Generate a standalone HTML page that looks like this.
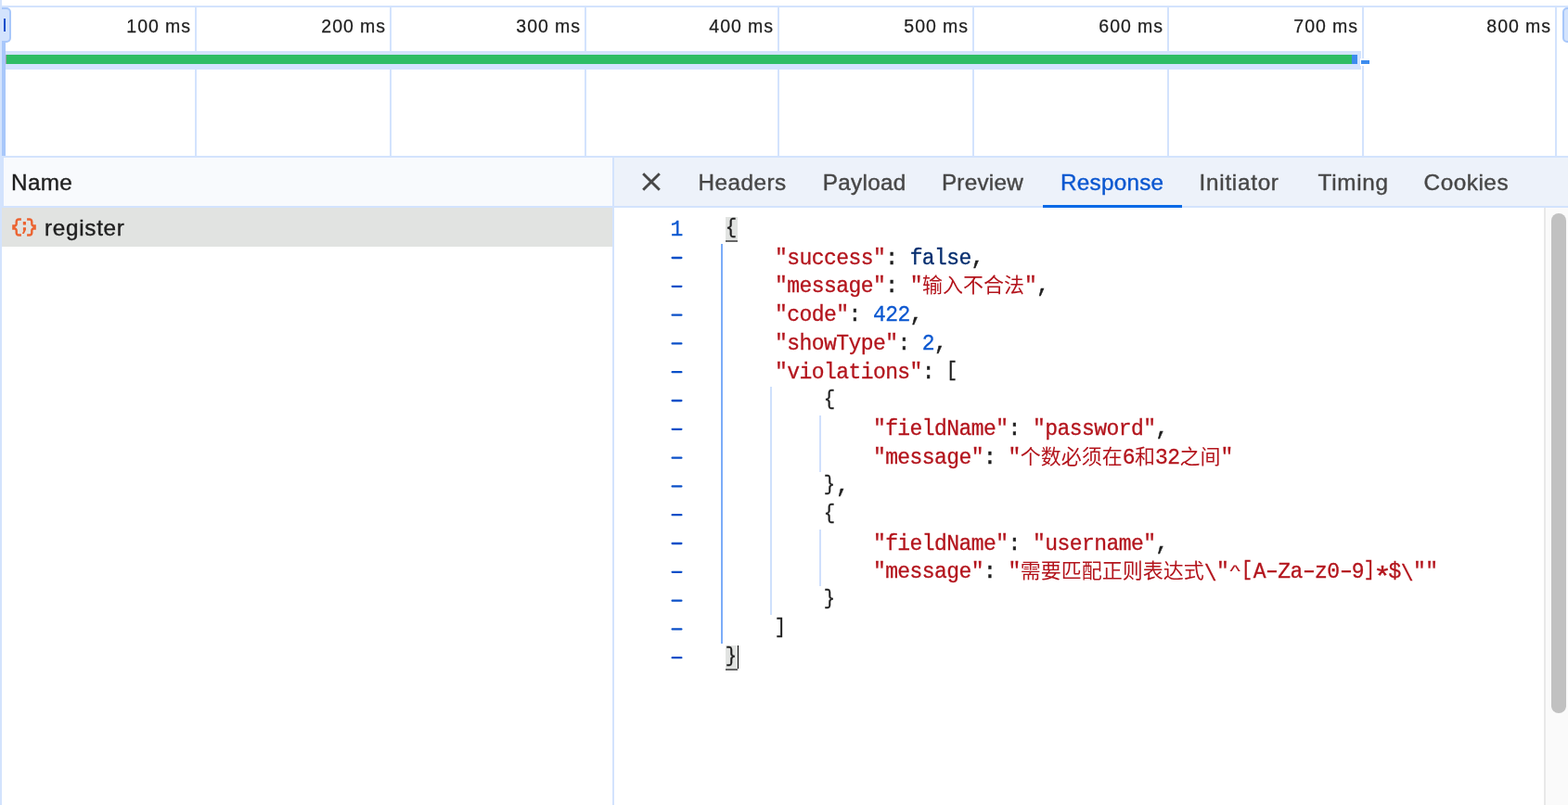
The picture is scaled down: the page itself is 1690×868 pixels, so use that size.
<!DOCTYPE html><html lang="en"><head><meta charset="utf-8"><title>DevTools - Network</title><style>
*{box-sizing:border-box;margin:0;padding:0}
html,body{width:1690px;height:868px;overflow:hidden;background:#fff}
#root{position:absolute;left:0;top:0;width:1690px;height:868px;overflow:hidden;will-change:transform}
body{position:relative;font-family:"Liberation Sans",sans-serif;color:#1f1f1f}
.a{position:absolute}
.d{position:absolute;background:#d3e3fd}
.lbl{position:absolute;top:13.1px;height:30px;line-height:30px;font-size:19.5px;letter-spacing:.95px;color:#1f1f1f;text-align:right;white-space:nowrap;-webkit-text-stroke:.25px currentColor}
.ui{position:absolute;white-space:nowrap;font-size:24.3px;line-height:30px;height:30px;-webkit-text-stroke:.4px currentColor}
.tab{color:#474747;top:181.5px}
.tab.sel{color:#0b57d0}
.ln{position:absolute;left:782.0px;height:30.8px;line-height:30.8px;white-space:pre;font-family:"Liberation Mono",monospace;font-size:23.0px;letter-spacing:-0.5622px;color:#1f1f1f;-webkit-text-stroke:.3px currentColor}
.ln{-webkit-text-stroke:.55px currentColor}
.k{color:#b3141c;-webkit-text-stroke:.3px currentColor}
.n{color:#0b57d0;-webkit-text-stroke:.3px currentColor}
.b{color:#062e6f;-webkit-text-stroke:.3px currentColor}
.dash{position:absolute;left:723.5px;width:12px;height:2.3px;border-radius:1.1px;background:#0a4fc8}
.g{position:absolute;width:2px;background:#cfe0fc}
.cj{display:inline-block;width:22.0px;letter-spacing:0;vertical-align:baseline;text-align:center;font-family:"Liberation Mono","Noto Sans CJK SC",monospace;font-size:22px;line-height:1;-webkit-text-stroke:0}
.br{display:inline-block;transform:translate(-.8px,-2.5px) scale(.9,.945);-webkit-text-stroke:.3px currentColor}
.hy{display:inline-block;transform:translateY(-.8px) scaleX(1.55)}
.as{display:inline-block;transform:translateY(7.5px) scale(1.45,1.28)}
.bs{display:inline-block;transform:translateY(3px)}
.ca{display:inline-block;transform:translateY(-1.6px) scaleY(.63)}
.hl{position:absolute;left:782px;width:13px;height:27px;background:#e1e3e1;border-bottom:2px solid #666}
</style></head><body><div id="root">
<div class="d" style="left:0;top:0;width:2px;height:868px"></div>
<div class="d" style="left:2px;top:6px;width:1688px;height:2px"></div>
<div class="d" style="left:210px;top:8px;width:2px;height:160px"></div>
<div class="lbl" style="left:60px;width:146px">100 ms</div>
<div class="d" style="left:420px;top:8px;width:2px;height:160px"></div>
<div class="lbl" style="left:270px;width:146px">200 ms</div>
<div class="d" style="left:630px;top:8px;width:2px;height:160px"></div>
<div class="lbl" style="left:480px;width:146px">300 ms</div>
<div class="d" style="left:838px;top:8px;width:2px;height:160px"></div>
<div class="lbl" style="left:688px;width:146px">400 ms</div>
<div class="d" style="left:1048px;top:8px;width:2px;height:160px"></div>
<div class="lbl" style="left:898px;width:146px">500 ms</div>
<div class="d" style="left:1258px;top:8px;width:2px;height:160px"></div>
<div class="lbl" style="left:1108px;width:146px">600 ms</div>
<div class="d" style="left:1468px;top:8px;width:2px;height:160px"></div>
<div class="lbl" style="left:1318px;width:146px">700 ms</div>
<div class="d" style="left:1676px;top:8px;width:2px;height:160px"></div>
<div class="lbl" style="left:1526px;width:146px">800 ms</div>
<div class="d" style="left:6px;top:55px;width:1461px;height:20px"></div>
<div class="a" style="left:6px;top:59px;width:1px;height:10px;background:#9aa0a6"></div>
<div class="a" style="left:7px;top:59px;width:1450px;height:10px;background:#2ebd64"></div>
<div class="a" style="left:1457px;top:59px;width:6px;height:10px;background:#3d8cee"></div>
<div class="a" style="left:1466px;top:63px;width:12px;height:8px;background:#fff"></div>
<div class="a" style="left:1467px;top:65px;width:9px;height:4px;background:#3d8cee"></div>
<div class="a" style="left:2px;top:46px;width:4px;height:122px;background:#a8c7fa"></div>
<div class="a" style="left:2px;top:8px;width:10px;height:38px;background:#d3e3fd;border:2px solid #a8c7fa;border-left:0;border-radius:0 5px 5px 0"></div>
<div class="a" style="left:4px;top:20px;width:2px;height:14px;background:#0a4fcb"></div>
<div class="a" style="left:1684px;top:8px;width:12px;height:38px;background:#d3e3fd;border:2px solid #a8c7fa;border-radius:5px 0 0 5px"></div>
<div class="d" style="left:2px;top:168px;width:1688px;height:2px"></div>
<div class="a" style="left:2px;top:170px;width:658px;height:52px;background:#f8fafd"></div>
<div class="d" style="left:2px;top:170px;width:2px;height:52px"></div>
<div class="ui" style="left:12px;top:181.5px;letter-spacing:.35px">Name</div>
<div class="d" style="left:2px;top:222px;width:1688px;height:2px"></div>
<div class="a" style="left:2px;top:224px;width:658px;height:42px;background:#e1e3e1"></div>
<svg class="a" style="left:12px;top:234px" width="28" height="22" viewBox="12 234 28 22" fill="#ec6330"><path d="M22.9 235.2H20.2C18.1 235.2 16.5 236.8 16.5 238.9V241.3C16.5 241.9 16.1 242.3 15.5 242.3H13.2V247.7H15.5C16.1 247.7 16.5 248.1 16.5 248.7V251.1C16.5 253.2 18.1 254.8 20.2 254.8H22.9V252.3H20.2C19.5 252.3 18.9 251.7 18.9 251V248.7C18.9 247.1 17.9 245.7 16.4 245.2V244.8C17.9 244.3 18.9 242.9 18.9 241.3V239C18.9 238.3 19.5 237.7 20.2 237.7H22.9Z"/><path transform="translate(52,0) scale(-1,1)" d="M22.9 235.2H20.2C18.1 235.2 16.5 236.8 16.5 238.9V241.3C16.5 241.9 16.1 242.3 15.5 242.3H13.2V247.7H15.5C16.1 247.7 16.5 248.1 16.5 248.7V251.1C16.5 253.2 18.1 254.8 20.2 254.8H22.9V252.3H20.2C19.5 252.3 18.9 251.7 18.9 251V248.7C18.9 247.1 17.9 245.7 16.4 245.2V244.8C17.9 244.3 18.9 242.9 18.9 241.3V239C18.9 238.3 19.5 237.7 20.2 237.7H22.9Z"/><rect x="24.8" y="239" width="3.2" height="3.6" rx="0.5"/><path d="M24.9 245.2H28V247.7L25.9 251.9H23.9L25.4 248.5H24.9Z"/></svg>
<div class="ui" style="left:48px;top:230.5px;letter-spacing:.7px">register</div>
<div class="d" style="left:660px;top:170px;width:2px;height:698px"></div>
<div class="a" style="left:662px;top:170px;width:1028px;height:52px;background:#edf2fa"></div>
<svg class="a" style="left:690px;top:184px" width="24" height="24" viewBox="0 0 24 24" fill="none" stroke="#474747" stroke-width="2.9"><path d="M3.2 3.2L20.8 20.8M20.8 3.2L3.2 20.8"/></svg>
<div class="ui tab" style="left:752.4px;letter-spacing:0.5px">Headers</div>
<div class="ui tab" style="left:886.8px;letter-spacing:0.27px">Payload</div>
<div class="ui tab" style="left:1014.9px;letter-spacing:0.25px">Preview</div>
<div class="ui tab sel" style="left:1143.0px;letter-spacing:0.23px">Response</div>
<div class="ui tab" style="left:1292.6px;letter-spacing:0.71px">Initiator</div>
<div class="ui tab" style="left:1420.6px;letter-spacing:0.7px">Timing</div>
<div class="ui tab" style="left:1534.6px;letter-spacing:0.53px">Cookies</div>
<div class="a" style="left:1124px;top:221px;width:150px;height:3px;background:#0769e6"></div>
<div class="a" style="left:1664px;top:224px;width:26px;height:644px;background:#fafafa;border-left:2px solid #e8e8e8"></div>
<div class="a" style="left:1672px;top:230px;width:16px;height:539px;border-radius:8px;background:#c1c1c1"></div>
<div class="g" style="left:777px;top:263px;height:431px;background:#7cacf8"></div>
<div class="g" style="left:830px;top:417px;height:246px"></div>
<div class="g" style="left:883px;top:448px;height:61px"></div>
<div class="g" style="left:883px;top:571px;height:61px"></div>
<div class="hl" style="top:234px"></div><div class="hl" style="top:696px"></div>
<div class="ln n" style="left:722.6px;top:232.7px">1</div>
<svg class="a" style="left:720px;top:224px" width="20" height="500" viewBox="0 0 20 500" fill="#0a4fc8"><rect x="3.5" y="52.85" width="12" height="2.3" rx="1.1"/><rect x="3.5" y="83.65" width="12" height="2.3" rx="1.1"/><rect x="3.5" y="114.45" width="12" height="2.3" rx="1.1"/><rect x="3.5" y="145.25" width="12" height="2.3" rx="1.1"/><rect x="3.5" y="176.05" width="12" height="2.3" rx="1.1"/><rect x="3.5" y="206.85" width="12" height="2.3" rx="1.1"/><rect x="3.5" y="237.65" width="12" height="2.3" rx="1.1"/><rect x="3.5" y="268.45" width="12" height="2.3" rx="1.1"/><rect x="3.5" y="299.25" width="12" height="2.3" rx="1.1"/><rect x="3.5" y="330.05" width="12" height="2.3" rx="1.1"/><rect x="3.5" y="360.85" width="12" height="2.3" rx="1.1"/><rect x="3.5" y="391.65" width="12" height="2.3" rx="1.1"/><rect x="3.5" y="422.45" width="12" height="2.3" rx="1.1"/><rect x="3.5" y="453.25" width="12" height="2.3" rx="1.1"/><rect x="3.5" y="484.05" width="12" height="2.3" rx="1.1"/></svg>
<div class="ln" style="top:232.70px"><span class="br">{</span></div>
<div class="ln" style="top:263.50px">    <span class="k">"success"</span>: <span class="b">false</span>,</div>
<div class="ln" style="top:294.30px">    <span class="k">"message"</span>: <span class="k">"<span class="cj">输</span><span class="cj">入</span><span class="cj">不</span><span class="cj">合</span><span class="cj">法</span>"</span>,</div>
<div class="ln" style="top:325.10px">    <span class="k">"code"</span>: <span class="n">422</span>,</div>
<div class="ln" style="top:355.90px">    <span class="k">"showType"</span>: <span class="n">2</span>,</div>
<div class="ln" style="top:386.70px">    <span class="k">"violations"</span>: <span class="br">[</span></div>
<div class="ln" style="top:417.50px">        <span class="br">{</span></div>
<div class="ln" style="top:448.30px">            <span class="k">"fieldName"</span>: <span class="k">"password"</span>,</div>
<div class="ln" style="top:479.10px">            <span class="k">"message"</span>: <span class="k">"<span class="cj">个</span><span class="cj">数</span><span class="cj">必</span><span class="cj">须</span><span class="cj">在</span>6<span class="cj">和</span>32<span class="cj">之</span><span class="cj">间</span>"</span></div>
<div class="ln" style="top:509.90px">        <span class="br">}</span>,</div>
<div class="ln" style="top:540.70px">        <span class="br">{</span></div>
<div class="ln" style="top:571.50px">            <span class="k">"fieldName"</span>: <span class="k">"username"</span>,</div>
<div class="ln" style="top:602.30px">            <span class="k">"message"</span>: <span class="k">"<span class="cj">需</span><span class="cj">要</span><span class="cj">匹</span><span class="cj">配</span><span class="cj">正</span><span class="cj">则</span><span class="cj">表</span><span class="cj">达</span><span class="cj">式</span><span class="bs">\</span>"<span class="ca">^</span><span class="br">[</span>A<span class="hy">-</span>Za<span class="hy">-</span>z0<span class="hy">-</span>9<span class="br">]</span><span class="as">*</span>$<span class="bs">\</span>""</span></div>
<div class="ln" style="top:633.10px">        <span class="br">}</span></div>
<div class="ln" style="top:663.90px">    <span class="br">]</span></div>
<div class="ln" style="top:694.70px"><span class="br">}</span></div>
<div class="a" style="left:794.5px;top:696px;width:1.6px;height:25px;background:#000"></div>
</div></body></html>
